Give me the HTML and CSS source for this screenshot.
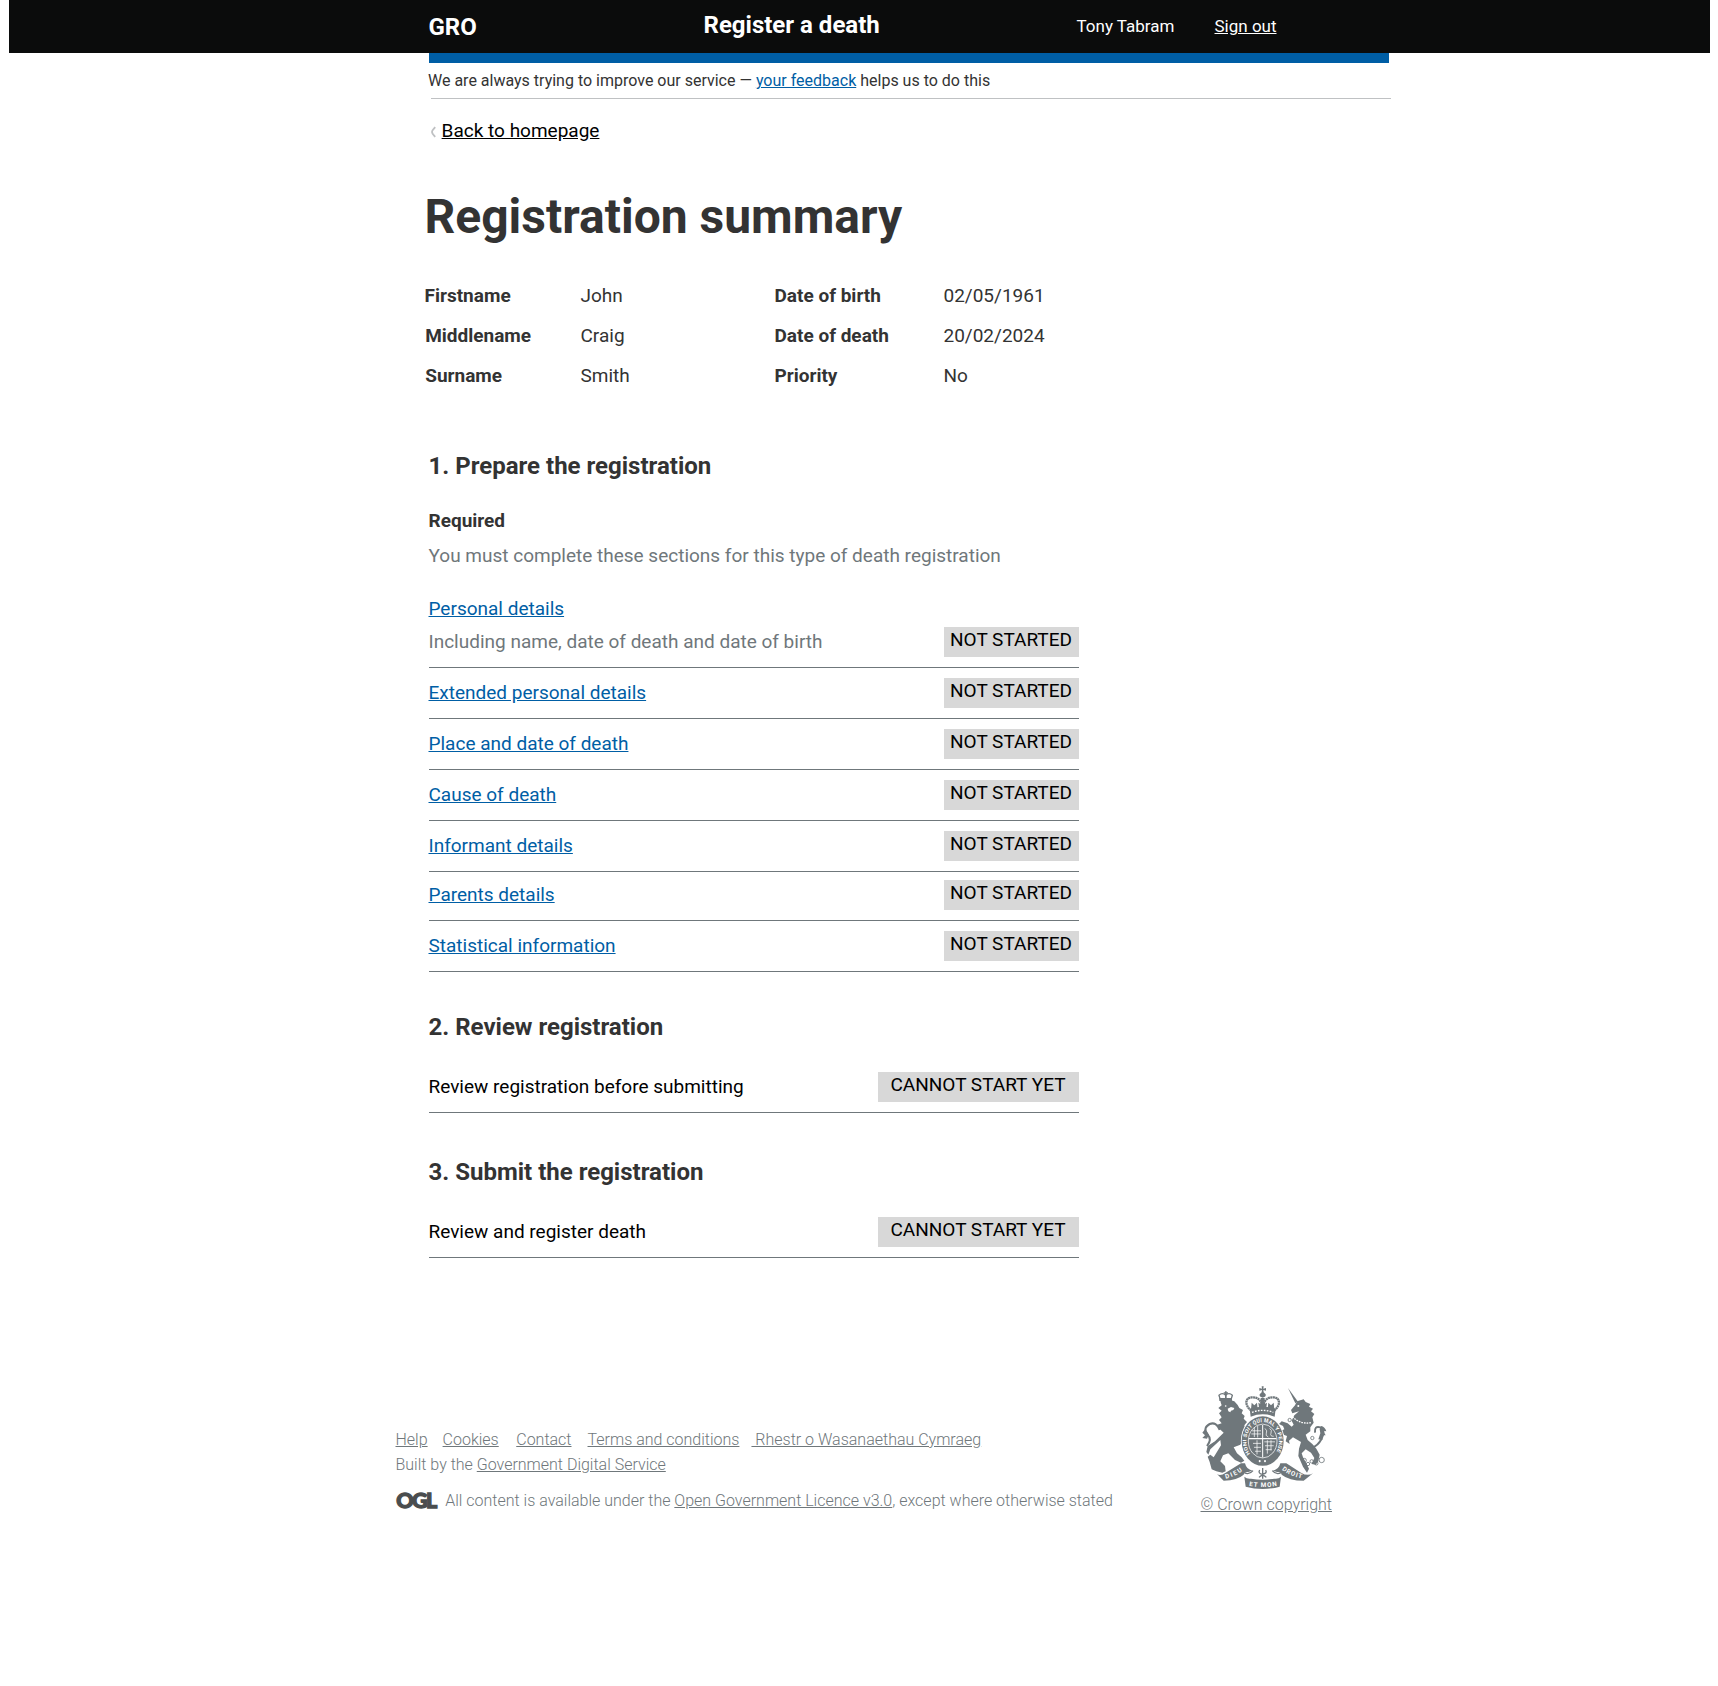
FILE: index.html
```html
<!DOCTYPE html>
<html lang="en">
<head>
<meta charset="utf-8">
<title>Registration summary - Register a death</title>
<link rel="stylesheet" href="styles.css">
</head>
<body>
<header class="header">
  <span class="header-org">GRO</span>
  <span class="header-service">Register a death</span>
  <span class="header-user">Tony Tabram</span>
  <a class="header-signout" href="#">Sign out</a>
</header>

<div class="bar"></div>
<p class="feedback">We are always trying to improve our service — <a class="link" href="#">your feedback</a> helps us to do this</p>
<hr class="rule">

<nav class="back">
  <svg class="back-icon" width="8" height="12" viewBox="0 0 8 12"><path d="M5.2 1.2C4 2.5 2 4.2 2 6s2 3.5 3.2 4.8" fill="none" stroke="#bfc1c3" stroke-width="1.9"/></svg>
  <a class="back-link" href="#">Back to homepage</a>
</nav>

<main class="main">
  <h1 class="title">Registration summary</h1>
  <dl class="summary">
    <dt>Firstname</dt><dd>John</dd><dt>Date of birth</dt><dd>02/05/1961</dd>
    <dt class="nudge">Middlename</dt><dd>Craig</dd><dt>Date of death</dt><dd>20/02/2024</dd>
    <dt class="nudge">Surname</dt><dd>Smith</dd><dt>Priority</dt><dd>No</dd>
  </dl>

  <section class="section">
    <h2 class="heading">1. Prepare the registration</h2>
    <h3 class="subheading">Required</h3>
    <p class="intro">You must complete these sections for this type of death registration</p>
    <ul class="tasks">
      <li class="task task-first">
        <div class="task-name"><a class="link" href="#">Personal details</a><span class="hint">Including name, date of death and date of birth</span></div>
        <span class="tag">NOT STARTED</span>
      </li>
      <li class="task"><div class="task-name"><a class="link" href="#">Extended personal details</a></div><span class="tag">NOT STARTED</span></li>
      <li class="task"><div class="task-name"><a class="link" href="#">Place and date of death</a></div><span class="tag">NOT STARTED</span></li>
      <li class="task"><div class="task-name"><a class="link" href="#">Cause of death</a></div><span class="tag">NOT STARTED</span></li>
      <li class="task"><div class="task-name"><a class="link" href="#">Informant details</a></div><span class="tag">NOT STARTED</span></li>
      <li class="task task-tight"><div class="task-name"><a class="link" href="#">Parents details</a></div><span class="tag">NOT STARTED</span></li>
      <li class="task"><div class="task-name"><a class="link" href="#">Statistical information</a></div><span class="tag">NOT STARTED</span></li>
    </ul>
  </section>

  <section class="section section-review">
    <h2 class="heading">2. Review registration</h2>
    <ul class="tasks tasks-single">
      <li class="task"><div class="task-name">Review registration before submitting</div><span class="tag tag-wide">CANNOT START YET</span></li>
    </ul>
  </section>

  <section class="section section-submit">
    <h2 class="heading">3. Submit the registration</h2>
    <ul class="tasks tasks-single">
      <li class="task"><div class="task-name">Review and register death</div><span class="tag tag-wide">CANNOT START YET</span></li>
    </ul>
  </section>
</main>

<footer class="footer">
  <div class="footer-meta">
    <div class="footer-links">
      <a class="footer-help" href="#">Help</a>
      <a class="footer-cookies" href="#">Cookies</a>
      <a class="footer-contact" href="#">Contact</a>
      <a class="footer-terms" href="#">Terms and conditions</a>
      <a href="#">&nbsp;Rhestr o Wasanaethau Cymraeg</a>
    </div>
    <p class="footer-built">Built by the <a href="#">Government Digital Service</a></p>
    <div class="footer-licence">
      <svg class="ogl" width="50" height="31" viewBox="0 0 50 31"><text class="ogl-text" x="0.2" y="23" textLength="41" lengthAdjust="spacing">OGL</text></svg>
      <p>All content is available under the <a href="#">Open Government Licence v3.0</a>, except where otherwise stated</p>
    </div>
  </div>
  <div class="footer-crest">
    <svg class="crest" width="128" height="105" viewBox="30 27 384 315">
      <defs>
        <path id="garter" d="M177 238A49 49 0 1 1 253 238"/>
        <path id="scroll-left" d="M104 308Q132 302 158 282"/>
        <path id="scroll-mid" d="M174 329Q215 337 260 329"/>
        <path id="scroll-right" d="M272 281Q300 302 336 308"/>
      </defs>
      <!-- lion -->
      <path class="ink" d="M88 76Q110 66 130 76Q142 88 145 96L156 102L152 112L161 120L158 128L168 138L160 148L164 158L154 170L156 188L148 206L128 214L138 232L152 244L160 254L150 260L132 252L112 232L96 238L88 256L102 270L104 286L94 290L76 286L62 280L56 258L50 242L58 236L68 244L80 224L90 208L88 192L58 220L52 236L46 228L50 210L72 196L98 170L74 148L92 142L84 132L92 124L84 112L92 104L82 96L92 88Z"/>
      <path class="line" d="M86 162Q76 136 56 144Q34 156 50 176Q64 190 48 210" stroke-width="6"/>
      <path class="ink" d="M42 160L34 170L42 178L34 186L48 188L54 176Z"/>
      <path class="hole" d="M110 98l10-5 10 3-3 6-7 2-2 5-6-3Z"/>
      <circle class="hole" cx="104" cy="90" r="2.5"/>
      <path class="line" d="M88 71L84 58Q94 48 104 58Q114 48 124 58L120 71Z" stroke-width="4"/>
      <path class="ink" d="M85 66h38v9h-38ZM102 46h5v22h-5ZM98 49h13v4H98Z"/>
      <!-- unicorn -->
      <path class="ink" d="M291 36L320 76L313 82Z"/>
      <path class="ink" d="M318 76L338 70L344 78L358 84L354 92L366 98L360 106L370 114L364 124L368 140L358 154L358 166L344 176L350 192L364 204L376 218L386 236L382 256L374 266L362 264L370 246L360 230L344 220L332 232L336 244L346 262L354 278L348 290L336 272L322 240L324 218L330 198L306 184L294 194L296 204L284 196L288 180L278 176L270 164L280 160L276 150L264 144L272 136L290 142L302 152L308 146L302 134L310 118L324 106L304 112L300 102L312 88Z"/>
      <path class="cut" d="M304 122Q328 146 360 140" stroke-width="4" stroke-dasharray="5 3"/>
      <circle class="hole" cx="322" cy="90" r="3"/>
      <path class="line" d="M364 214Q380 210 392 188Q404 164 388 154Q370 148 372 170" stroke-width="6"/>
      <path class="ink" d="M390 150Q402 152 406 166L396 164L404 178L394 178L394 192L382 190L388 172L386 160Z"/>
      <g class="line" stroke-width="2.5"><circle cx="340" cy="253" r="6"/><circle cx="351" cy="264" r="5"/><circle cx="362" cy="256" r="5"/><circle cx="392" cy="252" r="8"/><circle cx="376" cy="262" r="5"/><circle cx="364" cy="186" r="5"/><circle cx="296" cy="132" r="5"/></g>
      <!-- scrolls -->
      <path class="ink" d="M78 294Q88 302 104 290L150 262L162 262Q166 280 184 284L172 288Q160 286 158 296Q140 312 98 314Z"/>
      <path class="ink" d="M366 292Q350 302 330 290L286 262L268 262Q264 280 246 284L258 288Q270 286 272 296Q294 314 338 314Z"/>
      <path class="ink" d="M160 302Q168 310 180 308Q215 314 250 308Q262 310 270 302L266 332Q215 346 164 332Z"/>
      <path class="line" d="M186 284Q174 298 160 290M244 284Q256 298 270 290" stroke-width="4"/>
      <!-- garter and shield, with its motto -->
      <g transform="translate(0 -48) scale(1 1.18)">
        <circle class="hole" cx="215" cy="206" r="65.5"/>
        <circle class="ink" cx="215" cy="206" r="63"/>
        <circle class="cut" cx="215" cy="206" r="43" stroke-width="2"/>
        <path class="cut" d="M215 165V248M174 200H256" stroke-width="3"/>
        <path class="cut" d="M183 180h27M181 188h29M190 171v25M200 167v30M186 212h24M189 222h21M192 232h18M198 204v36M220 208h32M222 218h26M224 228h18M229 204v34M240 204v26M222 174q8 6 4 12t6 10M236 174q8 4 4 12t8 8" stroke-width="2"/>
        <circle class="hole" cx="206" cy="257" r="3"/><circle class="hole" cx="222" cy="257" r="3"/>
        <text class="motto motto-garter"><textPath href="#garter" textLength="214">HONI SOIT QUI MAL Y PENSE</textPath></text>
      </g>
      <!-- centre crown -->
      <path class="line" d="M181 104C162 90 160 66 182 64C198 63 208 70 212 84M249 104C268 90 270 66 248 64C232 63 222 70 218 84" stroke-width="7" stroke-dasharray="6 1.2"/>
      <path class="ink" d="M212 31h6l-1 7 8-2v8l-8-2 1 7 6 6q2 8-9 10q-11-2-9-10l6-6 1-7-8 2v-8l8 2Z"/>
      <path class="cut" d="M178 124Q215 110 252 124" stroke-width="5"/>
      <path class="ink" d="M209 66h12v44h-12ZM176 98Q215 86 254 98L251 122Q215 108 179 122Z"/>
      <path class="ink" d="M182 80l8 8 8-8 2 20h-20ZM232 80l8 8 8-8 2 20h-20ZM202 80q13 10 26 0l-3 22h-20Z"/>
      <path class="cut" d="M183 109Q215 97 247 109" stroke-width="4" stroke-dasharray="5 4"/>
      <!-- thistle under the shield -->
      <path class="line" d="M215 276V308M206 282Q200 292 214 295Q230 292 224 282M204 304Q215 292 226 304" stroke-width="4"/>
      <!-- scroll mottoes -->
      <text class="motto"><textPath href="#scroll-left" textLength="56">DIEU</textPath></text>
      <text class="motto"><textPath href="#scroll-mid" textLength="84">ET MON</textPath></text>
      <text class="motto"><textPath href="#scroll-right" textLength="66">DROIT</textPath></text>
    </svg>
    <a href="#">© Crown copyright</a>
  </div>
</footer>
</body>
</html>
```
FILE: styles.css
```css
* { box-sizing: border-box; }

body {
  margin: 0;
  min-height: 1686px;
  background: #fff;
  color: #333;
  font: 19px/23px Roboto, "Liberation Sans", sans-serif;
}

h1, h2, h3, p, ul, dl, dd { margin: 0; padding: 0; }
ul { list-style: none; }

.link { color: #005ea5; }

/* Header */
.header {
  display: flex;
  align-items: flex-start;
  height: 53px;
  margin: 0 8px 0 9px;
  padding-left: 419.5px;
  background: #0b0c0c;
  color: #fff;
  font-size: 17px;
  line-height: 20px;
}
.header-org, .header-service { font-size: 24px; line-height: 28px; font-weight: 700; }
.header-org { width: 275px; margin-top: 13px; }
.header-service { width: 373px; margin-top: 11px; }
.header-user { width: 138px; margin-top: 16px; }
.header-signout { margin-top: 16px; color: #fff; }

.bar { width: 960px; height: 10px; margin-left: 429px; background: #005ea5; }
.feedback { margin: 8px 0 8px 428px; font-size: 16px; line-height: 19px; }
.rule { width: 960px; height: 1px; margin: 0 0 0 431px; border: 0; background: #bfc1c3; }

.back { display: flex; gap: 4px; margin: 20px 0 0 429.6px; }
.back-icon { margin-top: 7px; }
.back-link { color: #000; }

/* Summary */
.main { margin-left: 424.5px; }
.title { margin-top: 46px; font-size: 48px; line-height: 57px; font-weight: 700; }
.summary {
  display: grid;
  grid-template-columns: 156px 194px 169px 200px;
  row-gap: 17px;
  margin-top: 39px;
}
.summary dt { font-weight: 700; }
.summary .nudge { padding-left: 0.7px; }

/* Task lists */
.section { width: 654.5px; margin-top: 65px; padding-left: 4px; }
.section-review { margin-top: 41px; }
.section-submit { margin-top: 45px; }
.heading { font-size: 24px; line-height: 28px; font-weight: 700; }
.subheading { margin-top: 29px; font-size: 19px; line-height: 23px; font-weight: 700; }
.intro { margin-top: 12px; color: #6f777b; }
.tasks { margin-top: 30px; }
.tasks-single { margin-top: 21px; }
.task {
  display: flex;
  justify-content: space-between;
  align-items: flex-end;
  padding: 10px 0;
  border-bottom: 1px solid #6f777b;
}
.task-first { padding-top: 0; }
.task-tight { padding-top: 8px; }
.task-name { display: flex; flex-direction: column; gap: 10px; padding-bottom: 4px; }
.tasks-single .task-name { color: #000; }
.hint { color: #6f777b; }
.tag {
  width: 135px;
  height: 30px;
  padding: 1px 1px 0 0;
  background: #d8d8d8;
  color: #000;
  text-align: center;
}
.tag-wide { width: 201px; }

/* Footer */
.footer {
  display: flex;
  margin: 127px 0 0 395.5px;
  color: #6f777b;
  font-size: 16px;
  line-height: 19px;
  font-weight: 300;
}
.footer a { color: #6f777b; }
.footer-meta { width: 805px; padding-top: 45px; }
.footer-links { display: flex; }
.footer-help { margin-right: 15px; }
.footer-cookies { margin-right: 17.5px; }
.footer-contact { margin-right: 16px; }
.footer-terms { margin-right: 12px; }
.footer-built { margin-top: 6px; }
.footer-licence { display: flex; margin-top: 17px; }
.ogl { margin: -6px 0; overflow: visible; }
.ogl-text {
  font: 900 21.5px Lato, sans-serif;
  fill: #4a4d4e;
  stroke: #4a4d4e;
  stroke-width: 1.3px;
}
.footer-licence p { margin-left: -0.3px; }
.footer-crest { display: flex; flex-direction: column; align-items: flex-start; gap: 5px; }

.crest .ink { fill: #6f777b; }
.crest .line { fill: none; stroke: #6f777b; }
.crest .cut { fill: none; stroke: #fff; }
.crest .hole { fill: #fff; }
.crest .motto { font: 700 19px Roboto, sans-serif; fill: #fff; }
.crest .motto-garter { font-size: 15px; }
```
